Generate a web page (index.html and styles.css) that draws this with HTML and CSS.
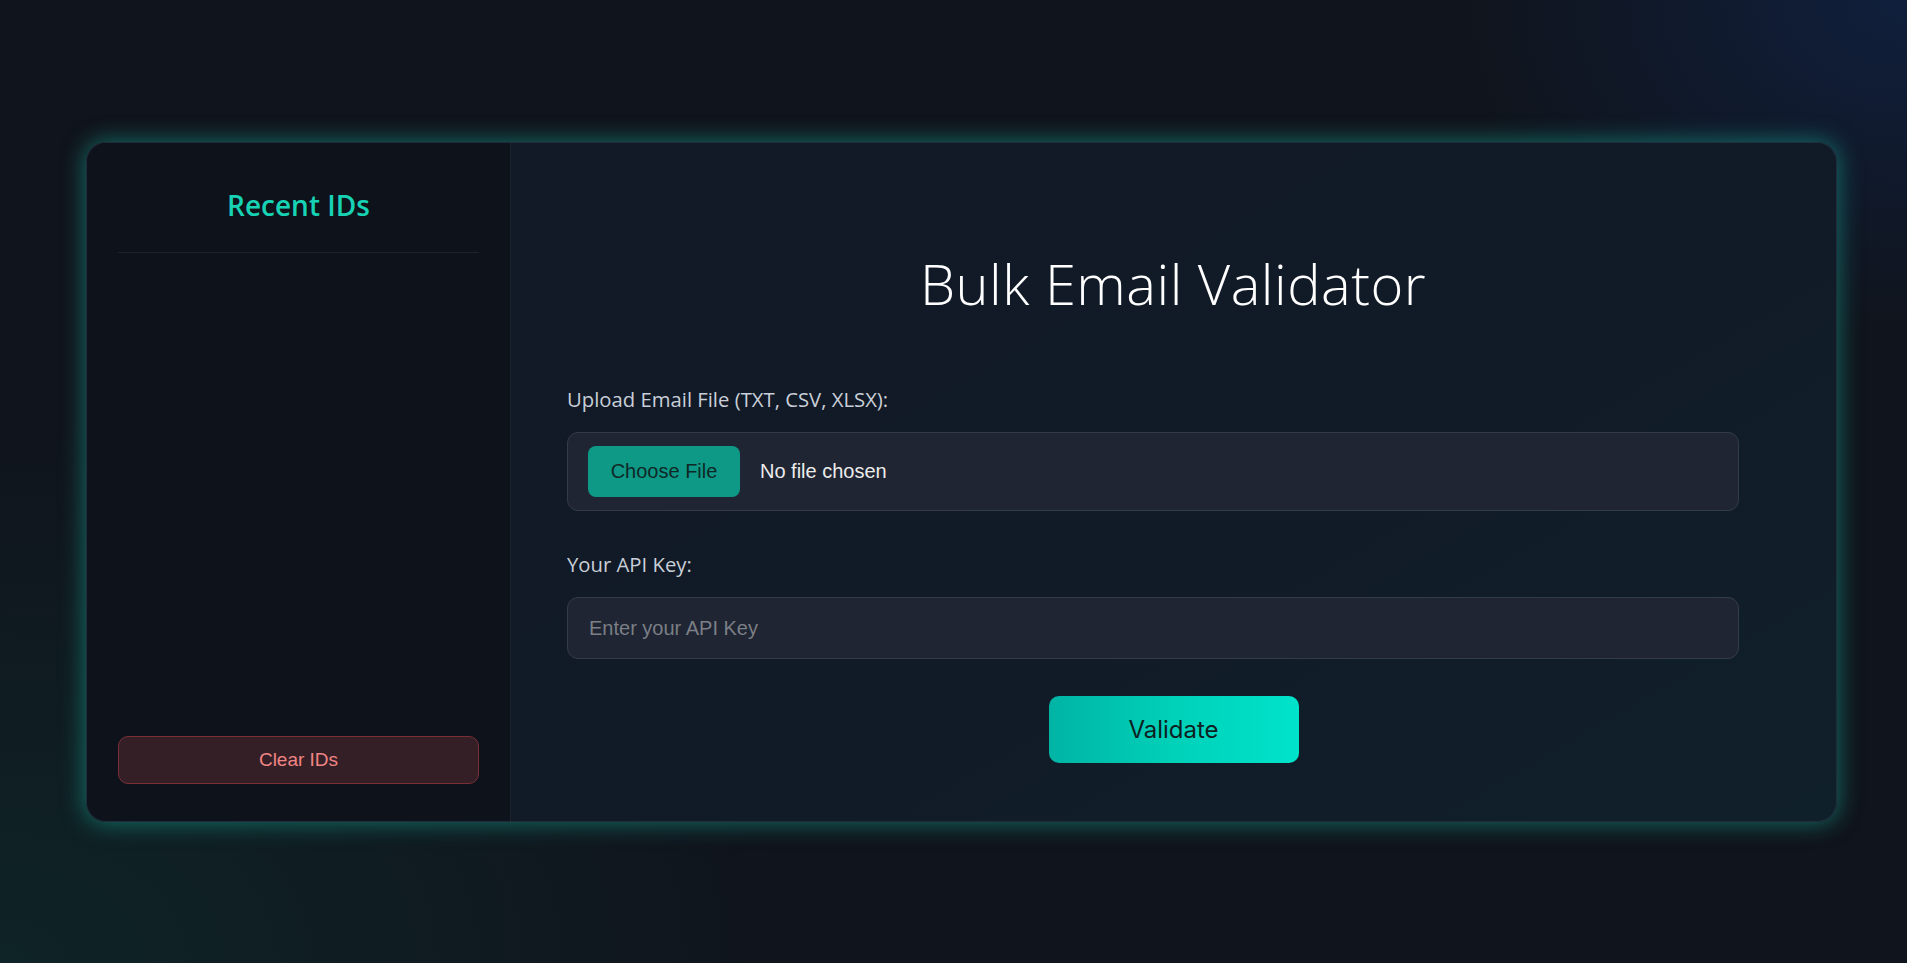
FILE: index.html
```html
<!DOCTYPE html>
<html lang="en">
<head>
<meta charset="utf-8">
<title>Bulk Email Validator</title>
<link rel="stylesheet" href="styles.css">
</head>
<body>
<div class="page">
  <div class="card">
    <aside class="sidebar">
      <h2 class="sidebar-title">Recent IDs</h2>
      <div class="id-list"></div>
      <button class="clear-btn" type="button">Clear IDs</button>
    </aside>
    <main class="main">
      <h1 class="title">Bulk Email Validator</h1>
      <label class="field-label">Upload Email File (TXT, CSV, XLSX):</label>
      <div class="file-box">
        <span class="file-btn">Choose File</span>
        <span class="file-name">No file chosen</span>
      </div>
      <label class="field-label api-label">Your API Key:</label>
      <input class="text-input" type="text" placeholder="Enter your API Key">
      <div class="actions">
        <button class="validate-btn" type="button">Validate</button>
      </div>
    </main>
  </div>
</div>
</body>
</html>
```

FILE: styles.css
```css
* { box-sizing: border-box; }
html, body { margin: 0; padding: 0; height: 100%; }
body {
  background:
    radial-gradient(ellipse 650px 480px at 100% 0%, rgba(16, 34, 68, 0.8), transparent 70%),
    radial-gradient(ellipse 1100px 750px at 0% 100%, rgba(14, 40, 42, 0.8), transparent 72%),
    #10141c;
  font-family: "Open Sans", "Liberation Sans", sans-serif;
  overflow: hidden;
}
.page {
  width: 1907px;
  height: 963px;
  padding: 142px 70px 0 86px;
}
.card {
  display: flex;
  width: 1751px;
  height: 680px;
  border-radius: 20px;
  overflow: hidden;
  background: linear-gradient(150deg, #121927 0%, #111a27 55%, #10202a 100%);
  box-shadow: 0 0 22px 2px rgba(24, 170, 150, 0.55);
  border: 1px solid rgba(60, 80, 100, 0.35);
}
.sidebar {
  width: 424px;
  flex: none;
  background: #0e131b;
  border-right: 1px solid #1b222c;
  display: flex;
  flex-direction: column;
  padding: 42px 31px 37px;
}
.sidebar-title {
  margin: 0;
  text-align: center;
  color: #17d2b4;
  font-size: 28px;
  font-weight: 600;
  line-height: 40px;
  padding-bottom: 27px;
  border-bottom: 1px solid #1d242e;
}
.id-list { flex: 1; }
.clear-btn {
  height: 48px;
  border-radius: 10px;
  border: 1px solid #7a2f37;
  background: #351f26;
  color: #f08585;
  font-family: "Liberation Sans", Arial, sans-serif;
  font-size: 19px;
}
.main {
  flex: 1;
  display: flex;
  flex-direction: column;
  padding: 102px 97px 0 56px;
}
.title {
  margin: 0 0 63px;
  text-align: center;
  color: #ffffff;
  font-weight: 300;
  font-size: 56px;
  line-height: 76px;
  letter-spacing: 0.5px;
  padding-left: 40px;
}
.field-label {
  display: block;
  color: #c9cfd8;
  font-size: 20.3px;
  line-height: 30px;
  margin-bottom: 18px;
}
.api-label { margin-top: 38px; }
.file-box {
  height: 79px;
  display: flex;
  align-items: center;
  gap: 20px;
  padding: 0 20px;
  background: #1f2532;
  border: 1px solid #343b48;
  border-radius: 11px;
}
.file-btn {
  display: flex;
  align-items: center;
  justify-content: center;
  width: 152px;
  height: 51px;
  background: #0e9986;
  color: #0f2826;
  border-radius: 8px;
  font-family: "Liberation Sans", Arial, sans-serif;
  font-size: 20px;
}
.file-name {
  color: #ececec;
  font-family: "Liberation Sans", Arial, sans-serif;
  font-size: 20px;
}
.text-input {
  height: 62px;
  padding: 0 21px;
  background: #1f2532;
  border: 1px solid #343b48;
  border-radius: 11px;
  font-family: "Liberation Sans", Arial, sans-serif;
  font-size: 20px;
  color: #e6e6e6;
  outline: none;
}
.text-input::placeholder { color: #7b7f86; }
.actions {
  display: flex;
  justify-content: center;
  margin-top: 37px;
  padding-left: 41px;
}
.validate-btn {
  width: 250px;
  height: 67px;
  border: none;
  border-radius: 10px;
  background: linear-gradient(90deg, #00b4a5 0%, #00d1b9 50%, #00e3cb 100%);
  color: #0f1f22;
  font-family: Inter, "Liberation Sans", sans-serif;
  font-size: 24px;
}
```
